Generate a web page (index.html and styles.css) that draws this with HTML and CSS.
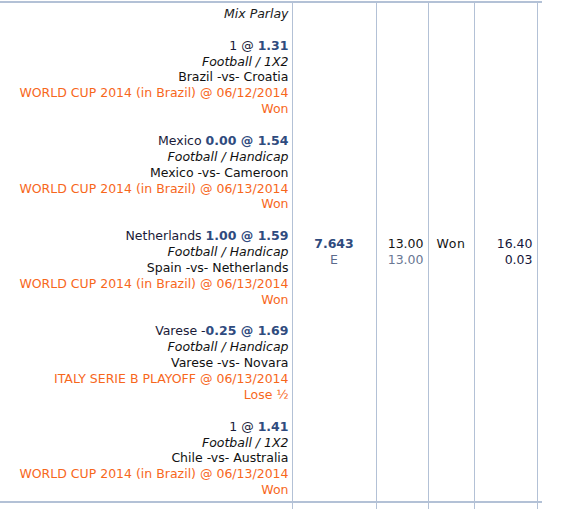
FILE: index.html
```html
<!DOCTYPE html>
<html>
<head>
<meta charset="utf-8">
<link rel="stylesheet" href="styles.css">
</head>
<body>
<div class="frame">
<table class="bets">
  <colgroup>
    <col class="c-detail">
    <col class="c-odds">
    <col class="c-stake">
    <col class="c-status">
    <col class="c-return">
    <col class="c-end">
  </colgroup>
  <tbody>
    <tr>
      <td class="detail">
        <div class="type">Mix Parlay</div>
        <div class="leg">
          <div class="pick">1 @ <b>1.31</b></div>
          <div class="sport">Football / 1X2</div>
          <div class="match">Brazil -vs- Croatia</div>
          <div class="league">WORLD CUP 2014 (in Brazil) @ 06/12/2014</div>
          <div class="result">Won</div>
        </div>
        <div class="leg">
          <div class="pick">Mexico <b>0.00 @ 1.54</b></div>
          <div class="sport">Football / Handicap</div>
          <div class="match">Mexico -vs- Cameroon</div>
          <div class="league">WORLD CUP 2014 (in Brazil) @ 06/13/2014</div>
          <div class="result">Won</div>
        </div>
        <div class="leg">
          <div class="pick">Netherlands <b>1.00 @ 1.59</b></div>
          <div class="sport">Football / Handicap</div>
          <div class="match">Spain -vs- Netherlands</div>
          <div class="league">WORLD CUP 2014 (in Brazil) @ 06/13/2014</div>
          <div class="result">Won</div>
        </div>
        <div class="leg">
          <div class="pick">Varese -<b>0.25 @ 1.69</b></div>
          <div class="sport">Football / Handicap</div>
          <div class="match">Varese -vs- Novara</div>
          <div class="league">ITALY SERIE B PLAYOFF @ 06/13/2014</div>
          <div class="result">Lose ½</div>
        </div>
        <div class="leg">
          <div class="pick">1 @ <b>1.41</b></div>
          <div class="sport">Football / 1X2</div>
          <div class="match">Chile -vs- Australia</div>
          <div class="league">WORLD CUP 2014 (in Brazil) @ 06/13/2014</div>
          <div class="result">Won</div>
        </div>
      </td>
      <td class="odds">
        <div class="odds-val">7.643</div>
        <div class="odds-type">E</div>
      </td>
      <td class="stake">
        <div>13.00</div>
        <div class="muted">13.00</div>
      </td>
      <td class="status">Won</td>
      <td class="return">
        <div>16.40</div>
        <div>0.03</div>
      </td>
      <td class="end"></td>
    </tr>
    <tr class="next">
      <td></td><td></td><td></td><td></td><td></td><td></td>
    </tr>
  </tbody>
</table>
</div>
</body>
</html>
```
FILE: styles.css
```css
html, body {
  margin: 0;
  padding: 0;
  background: #ffffff;
}

body {
  font-family: "DejaVu Sans", Verdana, sans-serif;
  font-size: 12.5px;
  line-height: 15.87px;
  color: #141414;
}

.frame {
  height: 509px;
  overflow: hidden;
  padding-top: 1px;
  box-sizing: border-box;
}

.bets {
  border-collapse: collapse;
  table-layout: fixed;
  width: 542px;
}

.c-detail { width: 292px; }
.c-odds { width: 84px; }
.c-stake { width: 52px; }
.c-status { width: 46px; }
.c-return { width: 63px; }
.c-end { width: 5px; }

.bets td {
  border-top: 2px solid #b3c1d6;
  border-left: 1px solid #b3c1d6;
  padding: 3px 4px;
  vertical-align: middle;
  white-space: nowrap;
}

.bets td:first-child {
  border-left: none;
}

.bets .detail {
  text-align: right;
  padding-right: 3px;
}

.type {
  font-style: italic;
  color: #1a1a1a;
}

.leg {
  margin-top: 15.87px;
}

.pick {
  color: #1a1a38;
}

.pick b {
  color: #2f4b7e;
  font-weight: bold;
}

.sport {
  font-style: italic;
  color: #111111;
}

.match {
  color: #111111;
}

.league,
.result {
  color: #f7671c;
}

.odds {
  text-align: center;
}

.odds-val {
  font-weight: bold;
  color: #2f4b7e;
}

.odds-type {
  color: #5b6b8c;
}

.stake {
  text-align: right;
  color: #141414;
}

.muted {
  color: #6a7793;
}

.bets .status {
  text-align: center;
  padding: 3px 0 18.87px 0;
  letter-spacing: 0.6px;
}

.return {
  text-align: right;
  color: #16163a;
}

.bets .end {
  padding: 0;
}

.next td {
  height: 20px;
}
```
